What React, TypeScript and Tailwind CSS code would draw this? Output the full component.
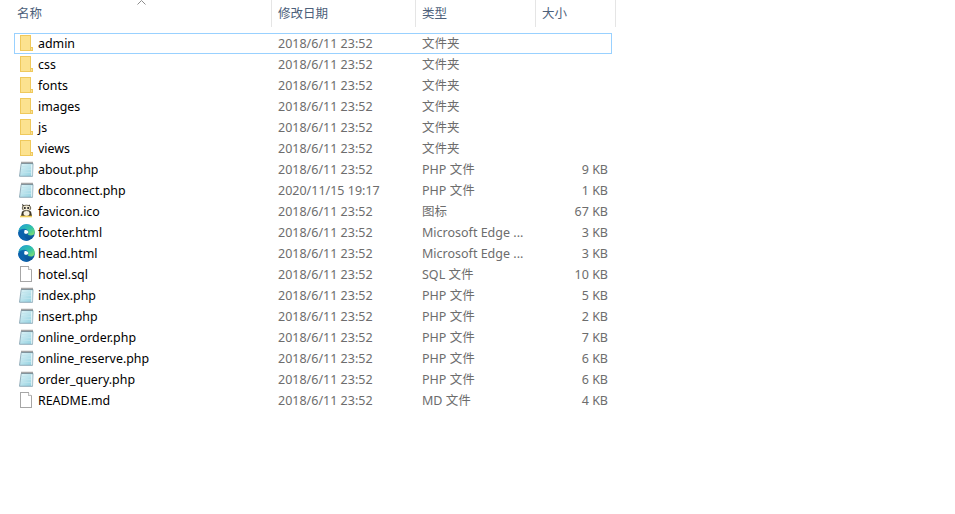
import React from "react";

type Kind = "folder" | "php" | "ico" | "edge" | "file";
type Row = { name: string; date: string; type: string; size: string; kind: Kind };

const D = "2018/6/11 23:52";
const rows: Row[] = [
  { name: "admin", date: D, type: "文件夹", size: "", kind: "folder" },
  { name: "css", date: D, type: "文件夹", size: "", kind: "folder" },
  { name: "fonts", date: D, type: "文件夹", size: "", kind: "folder" },
  { name: "images", date: D, type: "文件夹", size: "", kind: "folder" },
  { name: "js", date: D, type: "文件夹", size: "", kind: "folder" },
  { name: "views", date: D, type: "文件夹", size: "", kind: "folder" },
  { name: "about.php", date: D, type: "PHP 文件", size: "9 KB", kind: "php" },
  { name: "dbconnect.php", date: "2020/11/15 19:17", type: "PHP 文件", size: "1 KB", kind: "php" },
  { name: "favicon.ico", date: D, type: "图标", size: "67 KB", kind: "ico" },
  { name: "footer.html", date: D, type: "Microsoft Edge ...", size: "3 KB", kind: "edge" },
  { name: "head.html", date: D, type: "Microsoft Edge ...", size: "3 KB", kind: "edge" },
  { name: "hotel.sql", date: D, type: "SQL 文件", size: "10 KB", kind: "file" },
  { name: "index.php", date: D, type: "PHP 文件", size: "5 KB", kind: "php" },
  { name: "insert.php", date: D, type: "PHP 文件", size: "2 KB", kind: "php" },
  { name: "online_order.php", date: D, type: "PHP 文件", size: "7 KB", kind: "php" },
  { name: "online_reserve.php", date: D, type: "PHP 文件", size: "6 KB", kind: "php" },
  { name: "order_query.php", date: D, type: "PHP 文件", size: "6 KB", kind: "php" },
  { name: "README.md", date: D, type: "MD 文件", size: "4 KB", kind: "file" },
];

function Icon({ kind }: { kind: Kind }) {
  if (kind === "folder")
    return (
      <svg width="16" height="16" viewBox="0 0 16 16" shapeRendering="crispEdges">
        <path d="M2.500 .5H12.500V15.500H2.500Z" fill="#fce28f" stroke="#efc95c" />
        <path d="M12.500 12.500H14.500V15.500H12.500Z" fill="#f9e19a" stroke="#efc95c" />
      </svg>
    );
  if (kind === "php")
    return (
      <svg width="16" height="16" viewBox="0 0 16 16">
        <defs>
          <linearGradient id="ph" x1="0" y1="0" x2="1" y2="1">
            <stop offset="0" stopColor="#e2f4f7" />
            <stop offset="1" stopColor="#8fd0e0" />
          </linearGradient>
        </defs>
        <path d="M3.200 2.500H15L14.500 15.300H1.500Z" fill="url(#ph)" stroke="#7d9aaa" strokeWidth="0.8" />
        <path d="M3.500 1.600H15" stroke="#4a4a4a" strokeWidth="1.800" strokeDasharray="1 1" />
        <path d="M3.500 5.500H13M3.200 8.500H13M2.800 11.500H13" stroke="#bfe3ec" strokeWidth="0.8" />
        <path d="M13.800 3.500V14.800" stroke="#f4fafb" strokeWidth="1" />
      </svg>
    );
  if (kind === "file")
    return (
      <svg width="16" height="16" viewBox="0 0 16 16" shapeRendering="crispEdges">
        <path d="M2.500 .5H10.500L13.500 3.500V15.500H2.500Z" fill="#fff" stroke="#a6a6a6" />
        <path d="M10.500 .5V3.500H13.500" fill="#f0f0f0" stroke="#bcbcbc" />
      </svg>
    );
  if (kind === "edge")
    return (
      <svg width="17" height="17" viewBox="0 0 16 16">
        <defs>
          <linearGradient id="eb" x1="0" y1="0" x2="0" y2="1">
            <stop offset="0" stopColor="#0f7cc4" />
            <stop offset="1" stopColor="#0a4f92" />
          </linearGradient>
          <linearGradient id="eg" x1="0" y1="0" x2="1" y2="1">
            <stop offset="0" stopColor="#1f9fd8" />
            <stop offset="0.55" stopColor="#32c3a8" />
            <stop offset="1" stopColor="#8ee468" />
          </linearGradient>
        </defs>
        <circle cx="8" cy="8" r="7.800" fill="url(#eb)" />
        <path d="M.3 7C1 2.800 4.300 .2 8 .2c4.400 0 7.800 3.200 7.800 7.300 0 2.200-1.900 3.400-3.800 3.400-1.600 0-2.800-.7-2.800-1.400 0-.4.7-.6.7-1.700C9.900 6 8 4.500 5.800 4.500 3.200 4.500 1.300 5.500.3 7Z" fill="url(#eg)" />
        <path d="M5.400 8.800c0 3 2.400 6.200 5.400 6.200-.8.500-1.800.8-2.800.8C4 15.800.2 12.500.2 8.500 1 6.800 3 5.800 4.600 6.200 4.900 7 5.400 7.800 5.400 8.800Z" fill="#0b62ad" />
        <path d="M6 6C7.800 5.200 9.400 6.200 9.800 7.800 9.400 9.300 7 9.800 5.800 8.400Z" fill="#fff" />
      </svg>
    );
  return (
    <svg width="16" height="16" viewBox="0 0 16 16">
      <path d="M4 .8 7 3 5 4.500ZM12 1.500 9.500 3 12 4.500Z" fill="#2e2a20" />
      <ellipse cx="8.500" cy="5" rx="4.200" ry="2.800" fill="#f2ead2" stroke="#4a4230" strokeWidth="0.8" />
      <circle cx="6.800" cy="5" r="1.100" fill="#222" />
      <circle cx="10.200" cy="5" r="1.100" fill="#222" />
      <path d="M4 8.500c1-1 8-1 9 0l1 4.500H3Z" fill="#3f3828" />
      <ellipse cx="8.500" cy="10.500" rx="3" ry="2.400" fill="#f7f2e2" />
      <path d="M2 13.500h12" stroke="#f2cf5a" strokeWidth="1.600" />
    </svg>
  );
}

const cell = "flex items-center pt-[1px] pl-[6px] whitespace-nowrap overflow-hidden text-[#6d6d6d]";

export default function App() {
  return (
    <div
      className="w-[955px] h-[514px] bg-white overflow-hidden text-[12.5px] leading-none"
      style={{ fontFamily: '"Noto Sans", "Noto Sans CJK SC", sans-serif' }}
    >
      <div className="flex h-[27px] w-[616px] text-[#4c607a]">
        <div className="relative w-[272px] pl-[17px] pt-[8px] border-r border-[#e5e5e5]">
          名称
          <svg className="absolute left-[137px] top-0" width="9" height="5" viewBox="0 0 9 5" fill="none">
            <path d="M.5 4.500 4.500.5 8.500 4.500" stroke="#8c8c8c" />
          </svg>
        </div>
        <div className="w-[144px] pl-[6px] pt-[8px] border-r border-[#e5e5e5]">修改日期</div>
        <div className="w-[120px] pl-[6px] pt-[8px] border-r border-[#e5e5e5]">类型</div>
        <div className="w-[80px] pl-[6px] pt-[8px] border-r border-[#e5e5e5]">大小</div>
      </div>
      <div className="pt-[6px] pl-[14px] w-[612px]">
        {rows.map((r, i) => (
          <div
            key={r.name}
            className={
              i === 0
                ? "grid grid-cols-[257px_144px_120px_77px] h-[21px] border border-[#99d1ff]"
                : "grid grid-cols-[257px_144px_120px_77px] h-[21px] border border-transparent"
            }
          >
            <div className="flex items-center gap-[3px] pl-[3px] whitespace-nowrap text-[#000]">
              <span className="self-start mt-[1px] w-[17px] shrink-0">
                <Icon kind={r.kind} />
              </span>
              <span className="pt-[1px] text-[12.4px]">{r.name}</span>
            </div>
            <div className={cell}>{r.date}</div>
            <div className={cell}>{r.type}</div>
            <div className="flex items-center justify-end pt-[1px] pr-[5px] whitespace-nowrap text-[#6d6d6d]">{r.size}</div>
          </div>
        ))}
      </div>
    </div>
  );
}
